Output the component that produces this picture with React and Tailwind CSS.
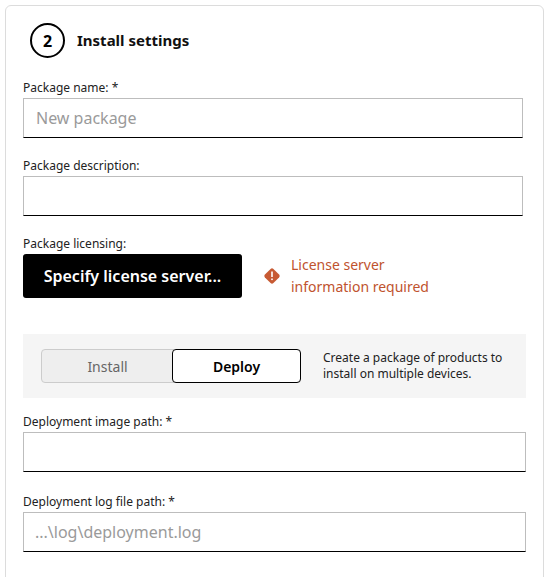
export default function App() {
  const f = { fontFamily: '"Noto Sans", "Open Sans", sans-serif' };
  return (
    <div className="w-[556px] h-[577px] bg-white overflow-hidden pt-[5px] pl-[5px]" style={f}>
      <div className="w-[539px] h-[600px] border border-[#dcdcdc] rounded-[6px] pl-[17px] pt-[17px]">
        <div className="flex items-center gap-[12px] ml-[7px]">
          <div className="w-[35px] h-[35px] rounded-full border-[2px] border-black flex items-center justify-center text-[16px] font-bold text-black">2</div>
          <div className="text-[15px] font-bold text-[#111]">Install settings</div>
        </div>
        <div className="mt-[22px] text-[12px] text-[#222] leading-[16px]">Package name: *</div>
        <div className="mt-[2px] w-[500px] h-[40px] border border-[#bdbdbd] border-b-black flex items-center px-[12px] text-[16px] text-[#9a9a9a]">New package</div>
        <div className="mt-[20px] text-[12px] text-[#222] leading-[16px]">Package description:</div>
        <div className="mt-[2px] w-[500px] h-[40px] border border-[#bdbdbd] border-b-black"></div>
        <div className="mt-[20px] text-[12px] text-[#222] leading-[16px]">Package licensing:</div>
        <div className="mt-[2px] flex items-center">
          <div className="w-[219px] h-[44px] bg-black rounded-[3px] text-white text-[16px] font-semibold flex items-center justify-center">Specify license server...</div>
          <svg width="20" height="20" viewBox="0 0 20 20" className="ml-[20px]">
            <rect x="4" y="4" width="12" height="12" rx="2" transform="rotate(45 10 10)" fill="#c75a33" />
            <rect x="9.2" y="5.5" width="1.6" height="5.5" fill="#fff" />
            <rect x="9.2" y="12.5" width="1.6" height="1.6" fill="#fff" />
          </svg>
          <div className="ml-[9px] text-[14px] leading-[22px] text-[#c0532e]">License server<br />information required</div>
        </div>
        <div className="mt-[36px] w-[503px] h-[64px] bg-[#f5f5f5] flex items-center pl-[18px]">
          <div className="flex w-[260px] h-[34px] rounded-[4px] border border-[#ccc] bg-[#eee]">
            <div className="w-[131px] flex items-center justify-center text-[14px] text-[#666]">Install</div>
            <div className="flex-1 -m-px flex items-center justify-center text-[14px] font-semibold text-black bg-white border border-black rounded-[4px]">Deploy</div>
          </div>
          <div className="ml-[22px] text-[12px] leading-[16px] text-[#222]">Create a package of products to<br />install on multiple devices.</div>
        </div>
        <div className="mt-[16px] text-[12px] text-[#222] leading-[16px]">Deployment image path: *</div>
        <div className="mt-[2px] w-[503px] h-[40px] border border-[#bdbdbd] border-b-black"></div>
        <div className="mt-[22px] text-[12px] text-[#222] leading-[16px]">Deployment log file path: *</div>
        <div className="mt-[2px] w-[503px] h-[40px] border border-[#bdbdbd] border-b-black flex items-center px-[11px] text-[16px] text-[#9a9a9a]">...\log\deployment.log</div>
      </div>
    </div>
  );
}
